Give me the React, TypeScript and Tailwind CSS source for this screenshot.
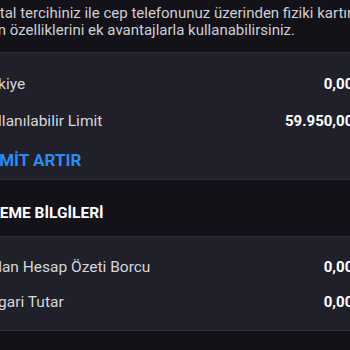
import React from "react";

const font = { fontFamily: "Roboto, 'Noto Sans', sans-serif" };

function Row({ label, value, h }: { label: string; value: string; h: string }) {
  return (
    <div className={`flex items-center justify-between px-4 ${h}`}>
      <span className="text-[15.5px] leading-[20px] text-[#d6d6db] whitespace-nowrap">{label}</span>
      <span className="text-[15px] leading-[20px] font-bold text-white whitespace-nowrap">{value}</span>
    </div>
  );
}

export default function App() {
  return (
    <div className="w-[350px] h-[350px] overflow-hidden bg-[#131219]" style={font}>
      <div className="ml-[-36px] w-[426px]">
        <div className="px-4 pt-[5px] pb-[13px] text-[15px] leading-[17px] text-[#cfcfd5] whitespace-nowrap">
          <div className="ml-[-1px]">Dijital tercihiniz ile cep telefonunuz üzerinden fiziki kartınızın</div>
          <div className="ml-[-12px]">kartın özelliklerini ek avantajlarla kullanabilirsiniz.</div>
        </div>

        <div className="bg-[#1f2029] border-y border-[#2d2e38] pt-[12px] pb-[1px]">
          <Row label="Bakiye" value="0,00 TL" h="h-[37px]" />
          <Row label="Kullanılabilir Limit" value="59.950,00 TL" h="h-[37px]" />
          <div className="px-4 mt-[2px] h-[37px] flex items-center">
            <span className="ml-[5px] text-[17px] leading-[20px] font-bold text-[#2b8cf2] whitespace-nowrap">LİMİT ARTIR</span>
          </div>
        </div>

        <div className="px-4 pt-[23px] pb-[13px]">
          <div className="ml-[-1px] text-[15.5px] leading-[20px] font-bold text-white whitespace-nowrap">ÖDEME BİLGİLERİ</div>
        </div>

        <div className="bg-[#1f2029] border-y border-[#2d2e38] pt-[12px] pb-[11px]">
          <Row label="Kalan Hesap Özeti Borcu" value="0,00 TL" h="h-[35px]" />
          <Row label="Asgari Tutar" value="0,00 TL" h="h-[35px]" />
        </div>
      </div>
    </div>
  );
}
